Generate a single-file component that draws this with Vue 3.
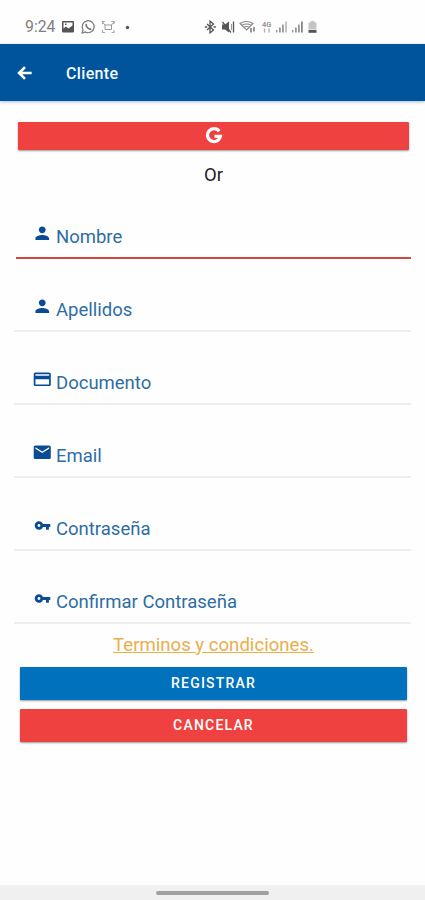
<script setup>
import { ref } from 'vue'

const icons = {
  person: 'M12 12c2.21 0 4-1.79 4-4s-1.79-4-4-4-4 1.79-4 4 1.79 4 4 4zm0 2c-2.67 0-8 1.34-8 4v2h16v-2c0-2.66-5.33-4-8-4z',
  card: 'M20 4H4c-1.11 0-1.99.89-1.99 2L2 18c0 1.11.89 2 2 2h16c1.11 0 2-.89 2-2V6c0-1.11-.89-2-2-2zm0 14H4v-6h16v6zm0-10H4V6h16v2z',
  mail: 'M20 4H4c-1.1 0-1.99.9-1.99 2L2 18c0 1.1.9 2 2 2h16c1.1 0 2-.9 2-2V6c0-1.1-.9-2-2-2zm0 4l-8 5-8-5V6l8 5 8-5v2z',
  key: 'M12.65 10C11.83 7.67 9.61 6 7 6c-3.31 0-6 2.69-6 6s2.69 6 6 6c2.61 0 4.83-1.67 5.65-4H17v4h4v-4h2v-4H12.65zM7 14c-1.1 0-2-.9-2-2s.9-2 2-2 2 .9 2 2-.9 2-2 2z'
}

const fields = [
  { name: 'nombre', label: 'Nombre', icon: 'person' },
  { name: 'apellidos', label: 'Apellidos', icon: 'person' },
  { name: 'documento', label: 'Documento', icon: 'card' },
  { name: 'email', label: 'Email', icon: 'mail' },
  { name: 'contrasena', label: 'Contraseña', icon: 'key' },
  { name: 'confirmar', label: 'Confirmar Contraseña', icon: 'key' }
]

const active = ref('nombre')
</script>

<template>
  <div class="screen">
    <div class="status">
      <span class="time">9:24</span>
      <svg class="status-left" width="72" height="16" viewBox="0 0 72 16">
        <path fill="#555" fill-rule="evenodd" d="M2 2h10q1 0 1 1v9.500q0 1-1 1H2q-1 0-1-1V3q0-1 1-1zM2.500 3.500v6l2.500-2 2.500 2 4-3v-3zM4 4.500h1.500V6H4z" />
        <g fill="none" stroke="#777" stroke-width="1.200">
          <path d="M21.200 14l.8-3.200a6 6 0 1 1 2.300 2.200z" />
          <path stroke-width="1.700" d="M25.200 4.900c-.7 2.800 2.200 5.800 5.200 5.200" />
          <path d="M41.500 5V2.500H44M50.500 2.500H53V5M53 11v2.500h-2.500M44 13.500h-2.500V11" stroke="#aaa" />
          <path d="M44 6h6.500v4.500H44zM41.500 3l2.500 3M53 3l-2.500 3" stroke="#999" stroke-width="1" />
        </g>
        <circle cx="66.500" cy="8.500" r="1.700" fill="#555" />
      </svg>
      <svg class="status-right" width="116" height="16" viewBox="0 0 116 16">
        <g fill="none" stroke="#555" stroke-width="1.300">
          <path d="M3 5l6.500 6L6 13.800V2.200L9.500 5 3 11M.8 8h2.400M9.500 8h2.400" />
          <path d="M18.500 3l8.500 10.500M29.500 2.500v11" />
        </g>
        <path fill="#555" d="M18 5.500h3l4-3v11l-4-3h-3z" />
        <path d="M27.500 5v6" stroke="#999" stroke-width="1" />
        <g fill="none" stroke="#888" stroke-width="1.100">
          <path d="M36 4.500q6.500-4 13 0L42.700 11zM38 6.300q4.700-2.700 9 0M40 8.300q2.700-1.500 5 0" />
          <path d="M47 9v4.500M50 8v4.500" stroke="#777" stroke-width="1.500" />
        </g>
        <text x="58" y="7.500">4G</text>
        <path d="M60.500 9.500v4M65 9.500v4" stroke="#aaa" stroke-width="1.300" />
        <g fill="#999">
          <path d="M72 11h1.500v2.500H72zM75 8.500h1.800v5H75zM78 5.500h1.800v8H78z" />
          <path d="M88 11h1.500v2.500H88zM91 8.500h1.800v5H91z" />
          <path d="M94 5.500h1.800v8H94z" />
        </g>
        <path fill="#c5c5c5" d="M81 2.500h2v11h-2zM104.500 3.500h2V2h4v1.500h2v7h-8z" />
        <path fill="#888" d="M97 2.500h1.800v11H97z" />
        <path fill="#555" d="M104.500 11h8v2.800h-8z" />
      </svg>
    </div>

    <header class="toolbar">
      <svg class="back" width="20" height="20" viewBox="0 0 24 24">
        <path d="M20 12H5M12 5l-7 7 7 7" />
      </svg>
      <h1>Cliente</h1>
    </header>

    <main class="content">
      <button class="btn google" aria-label="Google">
        <svg width="18" height="18" viewBox="0 0 18 18">
          <path d="M14.200 4.200A6.500 6.500 0 1 0 15.400 9.300H9.500" />
        </svg>
      </button>
      <p class="or">Or</p>

      <div
        v-for="field in fields"
        :key="field.name"
        class="field"
        :class="{ active: active === field.name }"
        @click="active = field.name"
      >
        <span class="icon-box">
          <svg :class="['icon', field.icon]" viewBox="0 0 24 24">
            <path :d="icons[field.icon]" />
          </svg>
        </span>
        <label>{{ field.label }}</label>
      </div>

      <a href="#" class="terms" @click.prevent>Terminos y condiciones.</a>
      <button class="btn register">REGISTRAR</button>
      <button class="btn cancel">CANCELAR</button>
    </main>

    <div class="nav-bar">
      <span class="handle"></span>
    </div>
  </div>
</template>

<style>
body {
  margin: 0;
}
</style>

<style scoped>
.screen {
  display: flex;
  flex-direction: column;
  width: 425px;
  height: 900px;
  overflow: hidden;
  background: #fefefe;
  font-family: Roboto, sans-serif;
}

.status {
  display: flex;
  align-items: center;
  box-sizing: border-box;
  height: 44px;
  padding: 9px 0 0 25px;
}

.time {
  width: 36px;
  font-size: 15.8px;
  color: #808080;
}

.status-right {
  margin-left: 71px;
}

.status-right text {
  font-size: 7.5px;
  font-weight: 700;
  fill: #999;
}

.toolbar {
  display: flex;
  align-items: center;
  height: 57px;
  padding-left: 15px;
  background: #00549c;
  color: #f5faff;
  box-shadow: 0 1px 3px rgba(0, 40, 80, 0.3);
}

.back path {
  fill: none;
  stroke: #fff;
  stroke-width: 3.2;
}

h1 {
  margin: 1px 0 0 31px;
  font-size: 16px;
  font-weight: 500;
  letter-spacing: 0.35px;
}

.content {
  display: flex;
  flex: 1;
  flex-direction: column;
  padding: 21px 14px 0;
}

.btn {
  display: flex;
  align-items: center;
  justify-content: center;
  height: 33px;
  margin: 0 4px 0 6px;
  padding: 0 0 1px;
  border: 0;
  border-radius: 1px;
  background: #f04141;
  color: #fff;
  font-family: inherit;
  font-size: 14px;
  font-weight: 500;
  letter-spacing: 1.2px;
  box-shadow: 0 1px 2px rgba(0, 0, 0, 0.4);
}

.google {
  height: 28px;
  margin: 0 2px 0 4px;
}

.google path {
  fill: none;
  stroke: #fff;
  stroke-width: 3.2;
}

.or {
  height: 36px;
  margin: 0;
  padding: 7px 0 0 2px;
  box-sizing: border-box;
  line-height: 36px;
  text-align: center;
  font-size: 18.5px;
  color: #222;
}

.field {
  display: flex;
  align-items: flex-end;
  box-sizing: border-box;
  height: 73px;
  padding: 0 0 8px 17px;
  border-bottom: 2px solid #eeeeee;
}

.field.active {
  margin: 0 0 0 2px;
  padding-left: 15px;
  border-color: #d0483f;
}

.icon-box {
  display: flex;
  align-items: center;
  justify-content: center;
  width: 22px;
  height: 22px;
  margin-bottom: 4.5px;
}

.icon {
  width: 20.5px;
  height: 20.5px;
  fill: #0a4c93;
}

.icon.key {
  width: 17px;
  height: 17px;
}

label {
  margin-left: 3px;
  line-height: 24px;
  font-size: 18.5px;
  color: #2d6da3;
}

.terms {
  align-self: center;
  height: 43px;
  padding-left: 2px;
  line-height: 43px;
  font-size: 18.6px;
  color: #ebae4c;
}

.register {
  margin-bottom: 9px;
  background: #0071bd;
}

.nav-bar {
  display: flex;
  justify-content: center;
  height: 15px;
  background: #f0f0f0;
}

.handle {
  width: 113px;
  height: 4px;
  margin-top: 6px;
  border-radius: 2px;
  background: #a0a0a0;
}
</style>
